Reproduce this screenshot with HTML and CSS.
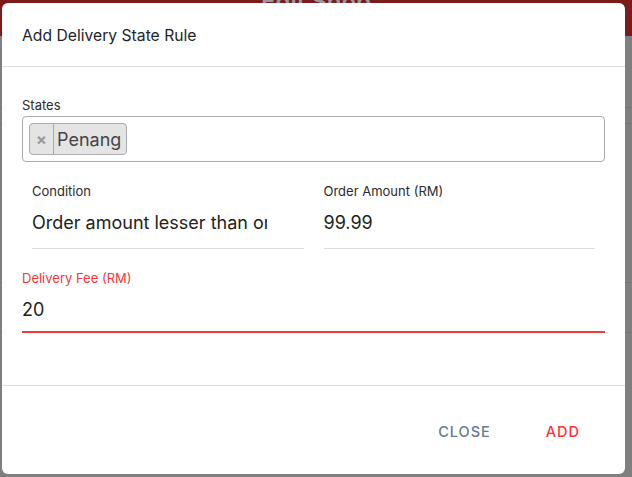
FILE: index.html
```html
<!DOCTYPE html>
<html>
<head>
<meta charset="utf-8">
<link rel="stylesheet" href="styles.css">
</head>
<body>
<div class="page">
  <div class="topbar"><span class="topbar-title">Edit Shop</span></div>
  <div class="page-rest">
    <div class="bg-line l1"></div>
    <div class="bg-line l2"></div>
    <div class="bg-line l3"></div>
    <div class="bg-line l4"></div>
  </div>
</div>
<div class="modal">
  <div class="modal-header">Add Delivery State Rule</div>
  <div class="modal-body">
    <label class="field-label">States</label>
    <div class="multi-select">
      <span class="chip"><span class="chip-x">×</span><span class="chip-text">Penang</span></span>
    </div>
    <div class="row">
      <div class="col">
        <label class="field-label small">Condition</label>
        <div class="value clip">Order amount lesser than or equal</div>
      </div>
      <div class="col">
        <label class="field-label small">Order Amount (RM)</label>
        <div class="value">99.99</div>
      </div>
    </div>
    <div class="fee">
      <label class="field-label fee-label">Delivery Fee (RM)</label>
      <div class="value fee-value">20</div>
    </div>
  </div>
  <div class="modal-footer">
    <button class="btn btn-close">CLOSE</button>
    <button class="btn btn-add">ADD</button>
  </div>
</div>
</body>
</html>
```

FILE: styles.css
```css
* { box-sizing: border-box; }
html, body {
  margin: 0;
  padding: 0;
  width: 632px;
  height: 477px;
  overflow: hidden;
  font-family: Inter, "Noto Sans", sans-serif;
  background: #808080;
}
.page {
  width: 632px;
  height: 477px;
  display: flex;
  flex-direction: column;
}
.topbar {
  height: 36px;
  background: #7b1b1b;
  display: flex;
  justify-content: center;
  align-items: flex-start;
  overflow: hidden;
}
.topbar-title {
  color: #9a9a9a;
  font-size: 24px;
  font-weight: 600;
  line-height: 20px;
  margin-top: -8px;
}
.page-rest {
  flex: 1;
  position: relative;
  background: #7f7f7f;
}
.bg-line {
  position: absolute;
  left: 0;
  right: 0;
  height: 1px;
  background: #747474;
}
.l1 { top: 71px; }
.l2 { top: 87px; }
.l3 { top: 246px; }
.l4 { top: 296px; }
.modal {
  position: absolute;
  left: 2px;
  top: 3px;
  width: 623px;
  height: 471px;
  background: #fff;
  border-radius: 6px;
  display: flex;
  flex-direction: column;
}
.modal-header {
  height: 64px;
  padding: 2px 20px 0 20px;
  display: flex;
  align-items: center;
  font-size: 15.7px;
  color: #212529;
  border-bottom: 1px solid #dedede;
}
.modal-body {
  flex: 1;
  padding: 30px 20px 0 20px;
  border-bottom: 1px solid #dedede;
}
.field-label {
  display: block;
  font-size: 13px;
  line-height: 16px;
  color: #2b2b2b;
}
.multi-select {
  margin-top: 3px;
  height: 46px;
  border: 1px solid #aaa;
  border-radius: 4px;
  padding: 6px;
  display: flex;
  align-items: flex-start;
}
.chip {
  display: flex;
  height: 32px;
  background: #e4e4e4;
  border: 1px solid #aaa;
  border-radius: 4px;
  align-items: stretch;
}
.chip-x {
  width: 24px;
  display: flex;
  align-items: center;
  justify-content: center;
  color: #999;
  font-weight: 700;
  font-size: 16px;
  border-right: 1px solid #aaa;
}
.chip-text {
  display: flex;
  align-items: center;
  padding: 0 5px 0 3px;
  font-size: 18px;
  color: #444;
}
.row {
  display: flex;
  gap: 20px;
  padding: 0 10px;
  margin-top: 21px;
}
.col {
  flex: 1;
  border-bottom: 1px solid #dcdcdc;
  height: 66px;
}
.value {
  font-size: 18px;
  line-height: 24px;
  color: #222;
  margin-top: 12px;
}
.clip {
  width: 235px;
  white-space: nowrap;
  overflow: hidden;
}
.fee {
  margin-top: 21px;
  border-bottom: 2px solid #f03a3a;
  height: 63px;
}
.fee-label {
  color: #f23a3a;
  font-size: 13px;
}
.fee-value {
  margin-top: 12px;
}
.modal-footer {
  height: 88px;
  display: flex;
  justify-content: flex-end;
  align-items: center;
  padding: 2px 29px 0 0;
  gap: 23px;
}
.btn {
  background: none;
  border: none;
  font-family: Inter, "Noto Sans", sans-serif;
  font-size: 14.5px;
  font-weight: 500;
  letter-spacing: 1px;
  padding: 8px 16px;
  cursor: pointer;
}
.btn-close { color: #687a99; }
.btn-add { color: #ff3333; }
```
